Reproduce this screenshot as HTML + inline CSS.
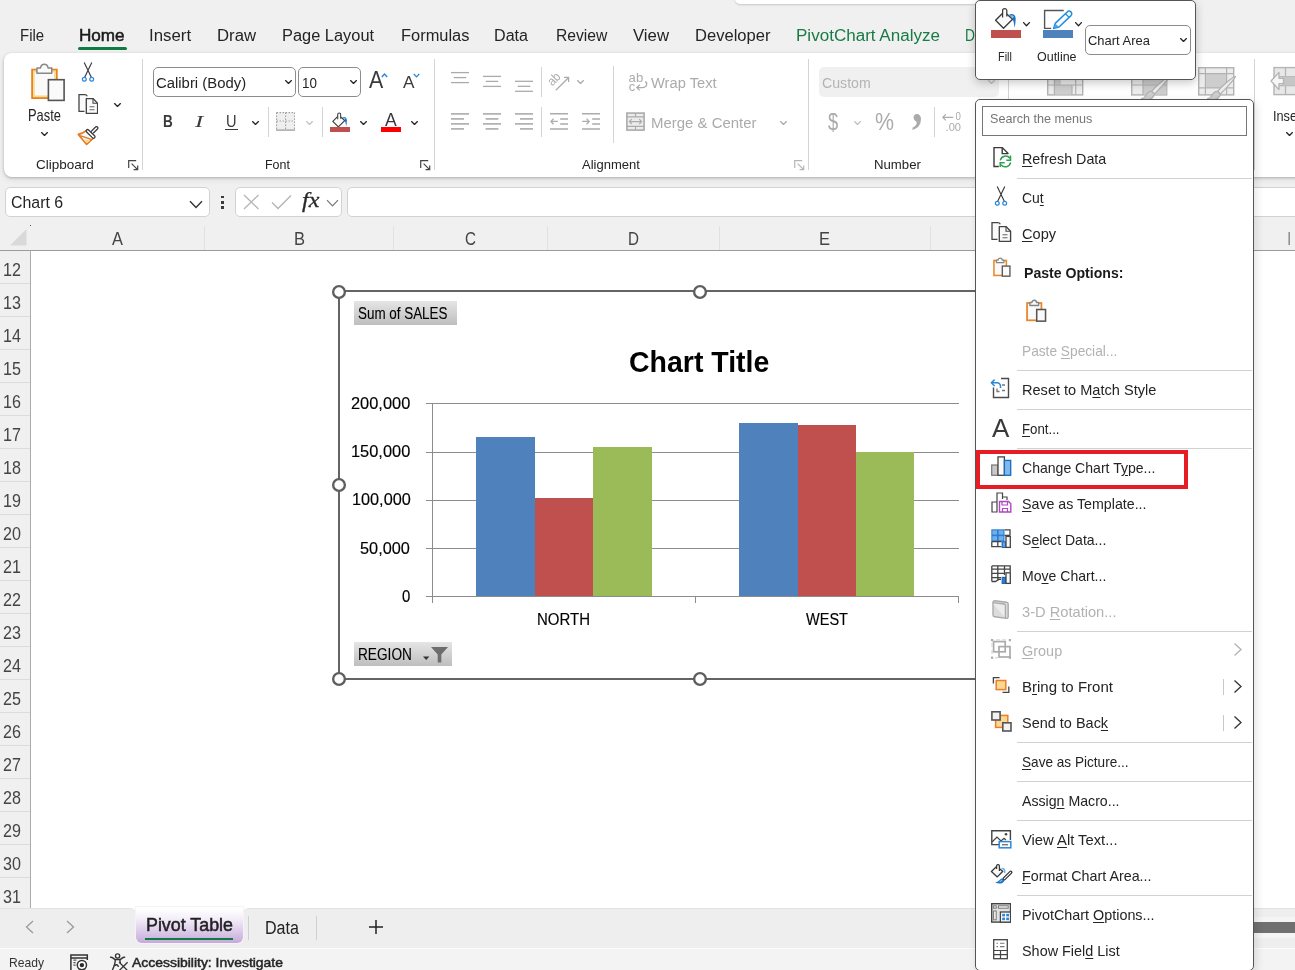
<!DOCTYPE html>
<html><head><meta charset="utf-8"><title>Excel</title><style>
*{margin:0;padding:0;box-sizing:border-box}
html,body{width:1295px;height:970px;overflow:hidden;background:#f0f0f0;font-family:"Liberation Sans",sans-serif}
#app{position:absolute;left:0;top:0;width:1295px;height:970px;overflow:hidden;will-change:transform}
.r{position:absolute;display:block}
.t{position:absolute;white-space:nowrap;transform-origin:0 50%;display:block}
.t u{text-decoration:underline;text-decoration-thickness:1px;text-underline-offset:2px}
</style></head><body><div id="app">
<div class="r" style="left:735px;top:-6px;width:400px;height:10px;background:#fff;border-radius:5px;box-shadow:0 1px 2px rgba(0,0,0,.18);"></div>
<span class="t" style="left:20.00px;top:25px;font-size:17.3px;line-height:20px;height:20px;color:#242424;transform:scaleX(0.8649);">File</span>
<span class="t" style="left:149.00px;top:25px;font-size:17.3px;line-height:20px;height:20px;color:#242424;transform:scaleX(0.9739);">Insert</span>
<span class="t" style="left:217.00px;top:25px;font-size:17.3px;line-height:20px;height:20px;color:#242424;transform:scaleX(0.9689);">Draw</span>
<span class="t" style="left:281.60px;top:25px;font-size:17.3px;line-height:20px;height:20px;color:#242424;transform:scaleX(0.9486);">Page Layout</span>
<span class="t" style="left:400.50px;top:25px;font-size:17.3px;line-height:20px;height:20px;color:#242424;transform:scaleX(0.9503);">Formulas</span>
<span class="t" style="left:494.00px;top:25px;font-size:17.3px;line-height:20px;height:20px;color:#242424;transform:scaleX(0.9315);">Data</span>
<span class="t" style="left:555.70px;top:25px;font-size:17.3px;line-height:20px;height:20px;color:#242424;transform:scaleX(0.9060);">Review</span>
<span class="t" style="left:633.00px;top:25px;font-size:17.3px;line-height:20px;height:20px;color:#242424;transform:scaleX(0.9697);">View</span>
<span class="t" style="left:694.70px;top:25px;font-size:17.3px;line-height:20px;height:20px;color:#242424;transform:scaleX(0.9577);">Developer</span>
<span class="t" style="left:79.00px;top:25px;font-size:17.3px;line-height:20px;height:20px;color:#1a1a1a;-webkit-text-stroke:0.55px #1a1a1a;transform:scaleX(0.9891);">Home</span>
<div class="r" style="left:78px;top:46.5px;width:49px;height:3px;background:#107c41;border-radius:1.5px;"></div>
<span class="t" style="left:796.00px;top:25px;font-size:17.3px;line-height:20px;height:20px;color:#187a45;transform:scaleX(0.9859);">PivotChart Analyze</span>
<span class="t" style="left:965.00px;top:25px;font-size:17.3px;line-height:20px;height:20px;color:#187a45;transform:scaleX(0.8000);">D</span>
<div class="r" style="left:4px;top:52.5px;width:1300px;height:124px;background:#fff;border-radius:8px;box-shadow:0 1px 3px rgba(0,0,0,.22),0 2px 6px rgba(0,0,0,.10);"></div>
<div class="r" style="left:142px;top:59px;width:1px;height:111px;background:#d4d4d4;"></div>
<div class="r" style="left:434px;top:59px;width:1px;height:111px;background:#d4d4d4;"></div>
<div class="r" style="left:808px;top:59px;width:1px;height:111px;background:#d4d4d4;"></div>
<div class="r" style="left:1008px;top:59px;width:1px;height:111px;background:#d4d4d4;"></div>
<div class="r" style="left:1254px;top:59px;width:1px;height:111px;background:#d4d4d4;"></div>
<div class="r" style="left:268px;top:107px;width:1px;height:30px;background:#d4d4d4;"></div>
<div class="r" style="left:322px;top:107px;width:1px;height:30px;background:#d4d4d4;"></div>
<div class="r" style="left:541px;top:67px;width:1px;height:30px;background:#d4d4d4;"></div>
<div class="r" style="left:541px;top:107px;width:1px;height:30px;background:#d4d4d4;"></div>
<div class="r" style="left:613px;top:66px;width:1px;height:77px;background:#d4d4d4;"></div>
<div class="r" style="left:934px;top:107px;width:1px;height:30px;background:#d4d4d4;"></div>
<span class="t" style="left:36.00px;top:157px;font-size:13.2px;line-height:15px;height:15px;color:#242424;transform:scaleX(1.0220);">Clipboard</span>
<span class="t" style="left:265.00px;top:157px;font-size:13.2px;line-height:15px;height:15px;color:#242424;transform:scaleX(0.9434);">Font</span>
<span class="t" style="left:582.00px;top:157px;font-size:13.2px;line-height:15px;height:15px;color:#242424;transform:scaleX(0.9851);">Alignment</span>
<span class="t" style="left:874.00px;top:157px;font-size:13.2px;line-height:15px;height:15px;color:#242424;">Number</span>
<svg class="r" style="left:128px;top:160px;" width="11" height="11" viewBox="0 0 11 11"><path d="M0.7 8 V0.7 H8.2" fill="none" stroke="#444" stroke-width="1.2"/><path d="M3.6 3.6 L9.6 9.6 M5.6 9.7 H9.7 V5.6" fill="none" stroke="#444" stroke-width="1.2"/></svg>
<svg class="r" style="left:420px;top:160px;" width="11" height="11" viewBox="0 0 11 11"><path d="M0.7 8 V0.7 H8.2" fill="none" stroke="#444" stroke-width="1.2"/><path d="M3.6 3.6 L9.6 9.6 M5.6 9.7 H9.7 V5.6" fill="none" stroke="#444" stroke-width="1.2"/></svg>
<svg class="r" style="left:794px;top:160px;" width="11" height="11" viewBox="0 0 11 11"><path d="M0.7 8 V0.7 H8.2" fill="none" stroke="#b5b5b5" stroke-width="1.2"/><path d="M3.6 3.6 L9.6 9.6 M5.6 9.7 H9.7 V5.6" fill="none" stroke="#b5b5b5" stroke-width="1.2"/></svg>
<svg class="r" style="left:30px;top:61.5px;" width="36.0" height="40.0" viewBox="0 0 36 40"><rect x="2.15" y="7.65" width="24.6" height="28.4" fill="#fafafa" stroke="#e8841f" stroke-width="1.9"/><rect x="3.95" y="9.45" width="21" height="24.8" fill="none" stroke="#f8d98c" stroke-width="1.6"/><path d="M6.95 11.2 V5.9 H10.5 A3.9 4.6 0 0 1 18.1 5.9 H21.75 V11.2 Z" fill="#fafafa" stroke="#8a8785" stroke-width="1.5" stroke-linejoin="round"/><rect x="18.4" y="17.7" width="15.7" height="20.7" fill="#fafafa" stroke="#555" stroke-width="1.6"/></svg>
<span class="t" style="left:28.00px;top:106px;font-size:16.6px;line-height:19px;height:19px;color:#242424;transform:scaleX(0.7765);">Paste</span>
<svg class="r" style="left:40px;top:131px;" width="9" height="6" viewBox="0 0 9 6"><path d="M1.58 1.58 L4.50 4.42 L7.42 1.58" fill="none" stroke="#242424" stroke-width="1.3" stroke-linecap="round" stroke-linejoin="round"/></svg>
<svg class="r" style="left:81px;top:62px;" width="14.0" height="20.5" viewBox="0 0 14 20.5"><path d="M3.2 0.5 L10.3 15.3 M10.8 0.5 L3.7 15.3" fill="none" stroke="#3a3a3a" stroke-width="1.15"/><circle cx="3.3" cy="17.3" r="1.9" fill="#fff" stroke="#2b88d8" stroke-width="1.25"/><circle cx="10.7" cy="17.3" r="1.9" fill="#fff" stroke="#2b88d8" stroke-width="1.25"/></svg>
<svg class="r" style="left:77.8px;top:93.8px;" width="20.5" height="20.5" viewBox="0 0 20.5 20.5"><path d="M6.5 17.3 H1 V0.7 H7 Q8.5 0.7 9.3 2.2" fill="#fafafa" stroke="#444" stroke-width="1.3"/><path d="M8.3 4.6 H15 L19.6 9.2 V19.4 H8.3 Z" fill="#fafafa" stroke="#444" stroke-width="1.35" stroke-linejoin="round"/><path d="M15 4.6 V9.2 H19.6" fill="none" stroke="#444" stroke-width="1.1"/><path d="M11.5 12.8 H16.5 M11.5 15.7 H16.5" stroke="#666" stroke-width="1.1"/></svg>
<svg class="r" style="left:112.5px;top:101.5px;" width="9" height="6" viewBox="0 0 9 6"><path d="M1.58 1.58 L4.50 4.42 L7.42 1.58" fill="none" stroke="#242424" stroke-width="1.3" stroke-linecap="round" stroke-linejoin="round"/></svg>
<svg class="r" style="left:77px;top:126px;" width="23" height="20" viewBox="0 0 23 20"><path d="M9.2 4.6 Q5.6 7.6 1.3 8.4 L9.6 18.4 L16.6 12" fill="#fafafa" stroke="#e8761a" stroke-width="1.6" stroke-linejoin="round"/><path d="M3 9.6 L15 13.6" stroke="#e8761a" stroke-width="1.5"/><path d="M7.4 12.9 L13.2 14.8 L9.8 17.2 Z" fill="#f9d67f"/><path d="M19.5 2 L16 5.5" stroke="#3a3a3a" stroke-width="3.9" stroke-linecap="round"/><path d="M19.5 2 L15.2 6.3" stroke="#fff" stroke-width="1.5" stroke-linecap="round"/><path d="M10.6 5 L16.6 10.8" stroke="#3a3a3a" stroke-width="4.1" stroke-linecap="round"/><path d="M10.6 5 L16.6 10.8" stroke="#fff" stroke-width="1.6" stroke-linecap="round"/></svg>
<div class="r" style="left:153px;top:67px;width:142.5px;height:29.75px;background:#fff;border:1px solid #8c8c8c;border-radius:5px;"></div>
<div class="r" style="left:298px;top:67px;width:62.5px;height:29.75px;background:#fff;border:1px solid #8c8c8c;border-radius:5px;"></div>
<span class="t" style="left:156.00px;top:75px;font-size:14.7px;line-height:16px;height:16px;color:#242424;transform:scaleX(1.0126);">Calibri (Body)</span>
<span class="t" style="left:302.00px;top:75px;font-size:14.7px;line-height:16px;height:16px;color:#242424;transform:scaleX(0.9160);">10</span>
<svg class="r" style="left:284px;top:79px;" width="9" height="6" viewBox="0 0 9 6"><path d="M1.58 1.58 L4.50 4.42 L7.42 1.58" fill="none" stroke="#242424" stroke-width="1.3" stroke-linecap="round" stroke-linejoin="round"/></svg>
<svg class="r" style="left:348.5px;top:79px;" width="9" height="6" viewBox="0 0 9 6"><path d="M1.58 1.58 L4.50 4.42 L7.42 1.58" fill="none" stroke="#242424" stroke-width="1.3" stroke-linecap="round" stroke-linejoin="round"/></svg>
<span class="t" style="left:369.00px;top:67px;font-size:23.5px;line-height:26px;height:26px;color:#3a3a3a;transform:scaleX(0.9079);">A</span>
<svg class="r" style="left:381.4px;top:73px;" width="7" height="5" viewBox="0 0 7 5"><path d="M0.8 4 L3.5 1.1 L6.2 4" fill="none" stroke="#2b88d8" stroke-width="1.5"/></svg>
<span class="t" style="left:403.00px;top:73px;font-size:17px;line-height:19px;height:19px;color:#3a3a3a;transform:scaleX(1.0110);">A</span>
<svg class="r" style="left:413.4px;top:73px;" width="7" height="5" viewBox="0 0 7 5"><path d="M0.8 1 L3.5 3.9 L6.2 1" fill="none" stroke="#2b88d8" stroke-width="1.3"/></svg>
<span class="t" style="left:163.20px;top:112px;font-size:16.6px;line-height:19px;height:19px;color:#3a3a3a;font-weight:700;transform:scaleX(0.8167);">B</span>
<span class="t" style="left:195.18px;top:111px;font-size:17.5px;line-height:20px;height:20px;color:#3a3a3a;font-style:italic;font-family:'Liberation Serif', serif;transform:scaleX(1.4074);">I</span>
<span class="t" style="left:226.00px;top:112px;font-size:16.5px;line-height:18px;height:18px;color:#3a3a3a;transform:scaleX(0.8842);">U</span>
<div class="r" style="left:225px;top:128.8px;width:12.5px;height:1.2px;background:#3a3a3a;"></div>
<svg class="r" style="left:250.5px;top:119.5px;" width="9" height="6" viewBox="0 0 9 6"><path d="M1.58 1.58 L4.50 4.42 L7.42 1.58" fill="none" stroke="#242424" stroke-width="1.3" stroke-linecap="round" stroke-linejoin="round"/></svg>
<svg class="r" style="left:276px;top:112px;" width="19.2" height="19" viewBox="0 0 19.2 19"><rect x="0" y="0" width="19.2" height="17.6" fill="#efefef"/><path d="M0.6 0.6 H18.6 M0.6 9 H18.6 M0.6 0.6 V17 M9.6 0.6 V17 M18.6 0.6 V17" fill="none" stroke="#a0a0a0" stroke-width="1.1" stroke-dasharray="1.4 1.6"/><path d="M0 18.1 H19.2" stroke="#a8a8a8" stroke-width="1.5"/></svg>
<svg class="r" style="left:305px;top:119.5px;" width="9" height="6" viewBox="0 0 9 6"><path d="M1.58 1.58 L4.50 4.42 L7.42 1.58" fill="none" stroke="#c2c2c2" stroke-width="1.3" stroke-linecap="round" stroke-linejoin="round"/></svg>
<svg class="r" style="left:331.4px;top:111.5px;" width="18.2" height="15.4" viewBox="0 0 26 22"><path d="M2.6 13.3 L11.2 4.8 L19.6 12.2 L10.5 21.2 Z" fill="#fafafa" stroke="#3a3a3a" stroke-width="1.61" stroke-linejoin="round"/><path d="M9.6 10.4 V3.6 A2.1 2.1 0 0 1 13.8 3.6 V9.6" fill="#fafafa" stroke="#3a3a3a" stroke-width="1.49"/><path d="M16 7.8 C19 6 22.8 7.4 22.7 12 C22.6 15 22.2 18 21.7 20.8 C21.2 17 20.6 14 19.6 12.2 Z" fill="#1e6fc0"/><path d="M17.2 8.4 C18.6 7.8 20.4 8.2 21 9.8 L19.4 11.4 Z" fill="#8ec0ee"/></svg>
<div class="r" style="left:330px;top:127px;width:20px;height:5px;background:#c0504d;"></div>
<svg class="r" style="left:359px;top:119.5px;" width="9" height="6" viewBox="0 0 9 6"><path d="M1.58 1.58 L4.50 4.42 L7.42 1.58" fill="none" stroke="#242424" stroke-width="1.3" stroke-linecap="round" stroke-linejoin="round"/></svg>
<span class="t" style="left:385.30px;top:109px;font-size:19px;line-height:21px;height:21px;color:#3a3a3a;transform:scaleX(0.9255);">A</span>
<div class="r" style="left:381px;top:127px;width:20px;height:5px;background:#ff0000;"></div>
<svg class="r" style="left:410px;top:119.5px;" width="9" height="6" viewBox="0 0 9 6"><path d="M1.58 1.58 L4.50 4.42 L7.42 1.58" fill="none" stroke="#242424" stroke-width="1.3" stroke-linecap="round" stroke-linejoin="round"/></svg>
<svg class="r" style="left:451px;top:0px" width="20" height="200" viewBox="0 0 20 200"><path d="M0 72.6 H18" stroke="#ababab" stroke-width="1.3"/><path d="M2.7 77.6 H15.3" stroke="#ababab" stroke-width="1.3"/><path d="M0 82.6 H18" stroke="#ababab" stroke-width="1.3"/></svg>
<svg class="r" style="left:483px;top:0px" width="20" height="200" viewBox="0 0 20 200"><path d="M0 76.4 H18" stroke="#ababab" stroke-width="1.3"/><path d="M2.7 81.4 H15.3" stroke="#ababab" stroke-width="1.3"/><path d="M0 86.4 H18" stroke="#ababab" stroke-width="1.3"/></svg>
<svg class="r" style="left:515px;top:0px" width="20" height="200" viewBox="0 0 20 200"><path d="M0 81.3 H18" stroke="#ababab" stroke-width="1.3"/><path d="M2.7 86.3 H15.3" stroke="#ababab" stroke-width="1.3"/><path d="M0 91.3 H18" stroke="#ababab" stroke-width="1.3"/></svg>
<svg class="r" style="left:451px;top:0px" width="20" height="200" viewBox="0 0 20 200"><path d="M0 113.9 H18" stroke="#ababab" stroke-width="1.6"/><path d="M0 118.9 H13" stroke="#ababab" stroke-width="1.6"/><path d="M0 123.9 H18" stroke="#ababab" stroke-width="1.6"/><path d="M0 128.9 H13" stroke="#ababab" stroke-width="1.6"/></svg>
<svg class="r" style="left:483px;top:0px" width="20" height="200" viewBox="0 0 20 200"><path d="M0 113.9 H18" stroke="#ababab" stroke-width="1.6"/><path d="M2.6 118.9 H15.4" stroke="#ababab" stroke-width="1.6"/><path d="M0 123.9 H18" stroke="#ababab" stroke-width="1.6"/><path d="M2.6 128.9 H15.4" stroke="#ababab" stroke-width="1.6"/></svg>
<svg class="r" style="left:515px;top:0px" width="20" height="200" viewBox="0 0 20 200"><path d="M0 113.9 H18" stroke="#ababab" stroke-width="1.6"/><path d="M5 118.9 H18" stroke="#ababab" stroke-width="1.6"/><path d="M0 123.9 H18" stroke="#ababab" stroke-width="1.6"/><path d="M5 128.9 H18" stroke="#ababab" stroke-width="1.6"/></svg>
<svg class="r" style="left:546px;top:68px;" width="26" height="26" viewBox="0 0 26 26"><path d="M9.8 22.2 L22.4 9.8 M18 9.4 H22.6 V14" fill="none" stroke="#ababab" stroke-width="1.25"/><text x="0" y="0" font-size="12.6" fill="#ababab" font-family="Liberation Sans" transform="translate(6.2,18.6) rotate(-45)" textLength="13" lengthAdjust="spacingAndGlyphs">ab</text></svg>
<svg class="r" style="left:576px;top:79px;" width="9" height="6" viewBox="0 0 9 6"><path d="M1.58 1.58 L4.50 4.42 L7.42 1.58" fill="none" stroke="#ababab" stroke-width="1.3" stroke-linecap="round" stroke-linejoin="round"/></svg>
<svg class="r" style="left:550px;top:112px;" width="18" height="18" viewBox="0 0 18 18"><path d="M0 1.8 H18 M10.2 6.9 H18 M10.2 12 H18 M0 16.9 H18" stroke="#ababab" stroke-width="1.5"/><path d="M7.8 9.4 H0.9 M3.6 6.6 L0.9 9.4 L3.6 12.2" fill="none" stroke="#ababab" stroke-width="1.25"/></svg>
<svg class="r" style="left:582px;top:112px;" width="18" height="18" viewBox="0 0 18 18"><path d="M0 1.8 H18 M10.2 6.9 H18 M10.2 12 H18 M0 16.9 H18" stroke="#ababab" stroke-width="1.5"/><path d="M0.2 9.4 H7.2 M4.5 6.6 L7.2 9.4 L4.5 12.2" fill="none" stroke="#ababab" stroke-width="1.25"/></svg>
<svg class="r" style="left:627px;top:70px;" width="22" height="24" viewBox="0 0 22 24"><text x="1.6" y="11.6" font-size="12.8" fill="#ababab" font-family="Liberation Sans" textLength="14.6" lengthAdjust="spacingAndGlyphs">ab</text><text x="1.8" y="20.6" font-size="12.8" fill="#ababab" font-family="Liberation Sans">c</text><path d="M18.2 11.6 C20.6 12.4 20.4 17.6 15.4 17.6 H10 M12.8 14.8 L9.8 17.6 L12.8 20.4" fill="none" stroke="#ababab" stroke-width="1.25"/></svg>
<span class="t" style="left:651.00px;top:75px;font-size:14.7px;line-height:16px;height:16px;color:#ababab;">Wrap Text</span>
<svg class="r" style="left:626px;top:112px;" width="19" height="19" viewBox="0 0 19 19"><rect x="0.9" y="1.1" width="17.2" height="17" fill="#ececec" stroke="#ababab" stroke-width="1.6"/><path d="M0.9 4.9 H18.1 M0.9 14.4 H18.1 M9.5 1.1 V4.9 M9.5 14.4 V18" stroke="#ababab" stroke-width="1.2"/><path d="M3.4 9.6 H15.6 M5.8 7.2 L3.4 9.6 L5.8 12 M13.2 7.2 L15.6 9.6 L13.2 12" fill="none" stroke="#ababab" stroke-width="1.2"/></svg>
<span class="t" style="left:651.00px;top:115px;font-size:14.7px;line-height:16px;height:16px;color:#ababab;transform:scaleX(1.0180);">Merge &amp; Center</span>
<svg class="r" style="left:779px;top:119.5px;" width="9" height="6" viewBox="0 0 9 6"><path d="M1.58 1.58 L4.50 4.42 L7.42 1.58" fill="none" stroke="#ababab" stroke-width="1.3" stroke-linecap="round" stroke-linejoin="round"/></svg>
<div class="r" style="left:819px;top:67px;width:180px;height:29.75px;background:#f0f0f0;border-radius:5px;"></div>
<span class="t" style="left:822.00px;top:75px;font-size:14.7px;line-height:16px;height:16px;color:#b4b4b4;transform:scaleX(0.9631);">Custom</span>
<svg class="r" style="left:987px;top:79px;" width="9" height="6" viewBox="0 0 9 6"><path d="M1.58 1.58 L4.50 4.42 L7.42 1.58" fill="none" stroke="#c0c0c0" stroke-width="1.3" stroke-linecap="round" stroke-linejoin="round"/></svg>
<span class="t" style="left:827.80px;top:108px;font-size:24px;line-height:27px;height:27px;color:#ababab;transform:scaleX(0.7626);">$</span>
<svg class="r" style="left:852.8px;top:119.6px;" width="9" height="6" viewBox="0 0 9 6"><path d="M1.58 1.58 L4.50 4.42 L7.42 1.58" fill="none" stroke="#c0c0c0" stroke-width="1.3" stroke-linecap="round" stroke-linejoin="round"/></svg>
<span class="t" style="left:875.00px;top:108px;font-size:24.5px;line-height:27px;height:27px;color:#ababab;transform:scaleX(0.8736);">%</span>
<span class="t" style="left:912.40px;top:76px;font-size:52px;line-height:57px;height:57px;color:#ababab;font-weight:700;font-family:'Liberation Serif', serif;transform:scaleX(0.8154);">,</span>
<svg class="r" style="left:941px;top:110px;" width="22" height="22" viewBox="0 0 22 22"><path d="M12.2 7.3 H1.8 M4.8 4.3 L1.8 7.3 L4.8 10.3" fill="none" stroke="#ababab" stroke-width="1.2"/><text x="14.6" y="10.4" font-size="11.4" fill="#ababab" font-family="Liberation Sans" textLength="5.4" lengthAdjust="spacingAndGlyphs">0</text><text x="4.6" y="20.5" font-size="11.4" fill="#ababab" font-family="Liberation Sans" textLength="15.4" lengthAdjust="spacingAndGlyphs">.00</text></svg>
<svg class="r" style="left:1047px;top:67px;" width="37" height="29" viewBox="0 0 37 29"><rect x="0.7" y="0.7" width="35" height="27.2" fill="#ececec" stroke="#b2b2b2" stroke-width="1.4"/><rect x="7.4" y="13" width="6.5" height="5" fill="#cdcdcd"/><rect x="7.4" y="18" width="17.5" height="9.5" fill="#cdcdcd"/><rect x="7.4" y="6" width="10" height="6" fill="#cdcdcd"/><path d="M7.4 0.7 V28 M28.7 0.7 V28 M0.7 6.5 H36 M0.7 18 H36 M25 18 V28" stroke="#b2b2b2" stroke-width="1.2" fill="none"/></svg>
<svg class="r" style="left:1131px;top:67px;" width="37" height="29" viewBox="0 0 37 29"><rect x="0.7" y="0.7" width="35" height="27.2" fill="#ececec" stroke="#b2b2b2" stroke-width="1.4"/><rect x="12" y="6.5" width="23.5" height="21" fill="#cdcdcd"/><path d="M12 0.7 V28 M0.7 6.5 H36 M0.7 18 H36" stroke="#b2b2b2" stroke-width="1.2" fill="none"/></svg>
<svg class="r" style="left:1131.5px;top:67px;" width="40" height="36" viewBox="0 0 40 36"><path d="M37.5 9.5 C33 11 24 19 19.5 24.5 L22.5 27 C28 21 35.5 14 37.5 9.5 Z" fill="#ececec" stroke="#b2b2b2" stroke-width="1.2" stroke-linejoin="round"/><path d="M19.5 24.5 C16 24 14.5 27 13.5 29 C12.5 31 11 31.5 9.5 31.5 C14 33.5 21 33 22.5 27 Z" fill="#cdcdcd" stroke="#b2b2b2" stroke-width="1.2" stroke-linejoin="round"/></svg>
<svg class="r" style="left:1198px;top:67px;" width="37" height="29" viewBox="0 0 37 29"><rect x="0.7" y="0.7" width="35" height="27.2" fill="#ececec" stroke="#b2b2b2" stroke-width="1.4"/><rect x="7.4" y="6.6" width="21.2" height="14.3" fill="#cdcdcd"/><path d="M7.4 0.7 V28 M28.6 0.7 V28 M0.7 6.6 H36 M0.7 20.9 H36" stroke="#b2b2b2" stroke-width="1.2" fill="none"/></svg>
<svg class="r" style="left:1198px;top:67px;" width="40" height="36" viewBox="0 0 40 36"><path d="M37.5 9.5 C33 11 24 19 19.5 24.5 L22.5 27 C28 21 35.5 14 37.5 9.5 Z" fill="#ececec" stroke="#b2b2b2" stroke-width="1.2" stroke-linejoin="round"/><path d="M19.5 24.5 C16 24 14.5 27 13.5 29 C12.5 31 11 31.5 9.5 31.5 C14 33.5 21 33 22.5 27 Z" fill="#cdcdcd" stroke="#b2b2b2" stroke-width="1.2" stroke-linejoin="round"/></svg>
<svg class="r" style="left:1270px;top:66px;" width="26" height="31" viewBox="0 0 26 31"><rect x="4" y="1.6" width="24" height="27" fill="#e8e8e8" stroke="#b4b4b4" stroke-width="1.4"/><path d="M4 10.6 H28 M4 19.6 H28 M15.5 1.6 V10.6 M15.5 19.6 V28.6" stroke="#b4b4b4" stroke-width="1.3"/><rect x="12" y="10.6" width="16" height="9" fill="#c6c6c6"/><path d="M13.5 12.4 H9 V6.4 L1 15 L9 23.6 V17.6 H13.5 Z" fill="#f6f6f6" stroke="#b4b4b4" stroke-width="1.3" stroke-linejoin="round"/></svg>
<span class="t" style="left:1273.00px;top:107px;font-size:15.5px;line-height:17px;height:17px;color:#242424;transform:scaleX(0.8205);">Inse</span>
<svg class="r" style="left:1285px;top:131px;" width="9" height="6" viewBox="0 0 9 6"><path d="M1.58 1.58 L4.50 4.42 L7.42 1.58" fill="none" stroke="#242424" stroke-width="1.3" stroke-linecap="round" stroke-linejoin="round"/></svg>
<div class="r" style="left:4.5px;top:187px;width:205px;height:29.5px;background:#fff;border-radius:5px;border:1px solid #d2d2d2;"></div>
<span class="t" style="left:11.00px;top:193px;font-size:16.3px;line-height:18px;height:18px;color:#242424;transform:scaleX(0.9765);">Chart 6</span>
<svg class="r" style="left:189px;top:200px;" width="14" height="9" viewBox="0 0 14 9"><path d="M1 1.2 L7 7.4 L13 1.2" fill="none" stroke="#333" stroke-width="1.4"/></svg>
<div class="r" style="left:221.1px;top:195.6px;width:2.6px;height:2.6px;background:#3a3a3a;"></div>
<div class="r" style="left:221.1px;top:201.0px;width:2.6px;height:2.6px;background:#3a3a3a;"></div>
<div class="r" style="left:221.1px;top:206.4px;width:2.6px;height:2.6px;background:#3a3a3a;"></div>
<div class="r" style="left:235px;top:187px;width:107px;height:29.5px;background:#fff;border-radius:5px;border:1px solid #d2d2d2;"></div>
<svg class="r" style="left:243px;top:194px;" width="17" height="16" viewBox="0 0 17 16"><path d="M1 1 L15.5 15 M15.5 1 L1 15" stroke="#b4b4b4" stroke-width="1.3"/></svg>
<svg class="r" style="left:271px;top:194px;" width="21" height="16" viewBox="0 0 21 16"><path d="M1 8.5 L7 14.5 L20 1.5" fill="none" stroke="#b4b4b4" stroke-width="1.3"/></svg>
<span class="t" style="left:302.40px;top:188px;font-size:21px;line-height:24px;height:24px;color:#2a2a2a;-webkit-text-stroke:0.3px #2a2a2a;font-style:italic;font-family:'Liberation Serif', serif;transform:scaleX(1.1504);">fx</span>
<svg class="r" style="left:326px;top:199px;" width="13" height="9" viewBox="0 0 13 9"><path d="M1 1.2 L6.5 7 L12 1.2" fill="none" stroke="#777" stroke-width="1.2"/></svg>
<div class="r" style="left:347px;top:187px;width:960px;height:29.5px;background:#fff;border-radius:5px;border:1px solid #d2d2d2;"></div>
<div class="r" style="left:31px;top:250.5px;width:1270px;height:658px;background:#fff;"></div>
<div class="r" style="left:0px;top:250px;width:1295px;height:1px;background:#9b9b9b;"></div>
<div class="r" style="left:30px;top:250px;width:1px;height:659px;background:#ababab;"></div>
<div class="r" style="left:30px;top:224.6px;width:1.2px;height:1.2px;background:#555;"></div>
<svg class="r" style="left:9px;top:228px;" width="19" height="19" viewBox="0 0 19 19"><path d="M17.5 1 V17.5 H1 Z" fill="#d9d9d9"/></svg>
<span class="t" style="left:112.00px;top:228px;font-size:19px;line-height:21px;height:21px;color:#444;transform:scaleX(0.8627);">A</span>
<span class="t" style="left:293.50px;top:228px;font-size:19px;line-height:21px;height:21px;color:#444;transform:scaleX(0.8713);">B</span>
<span class="t" style="left:464.50px;top:228px;font-size:19px;line-height:21px;height:21px;color:#444;transform:scaleX(0.8000);">C</span>
<span class="t" style="left:628.00px;top:228px;font-size:19px;line-height:21px;height:21px;color:#444;transform:scaleX(0.8000);">D</span>
<span class="t" style="left:819.00px;top:228px;font-size:19px;line-height:21px;height:21px;color:#444;transform:scaleX(0.8713);">E</span>
<span class="t" style="left:1288.30px;top:228px;font-size:19px;line-height:21px;height:21px;color:#2a2a2a;transform:scaleX(0.4190);">I</span>
<div class="r" style="left:204px;top:225.5px;width:1px;height:24.5px;background:#e1e1e1;"></div>
<div class="r" style="left:393px;top:225.5px;width:1px;height:24.5px;background:#e1e1e1;"></div>
<div class="r" style="left:547px;top:225.5px;width:1px;height:24.5px;background:#e1e1e1;"></div>
<div class="r" style="left:719px;top:225.5px;width:1px;height:24.5px;background:#e1e1e1;"></div>
<div class="r" style="left:930px;top:225.5px;width:1px;height:24.5px;background:#e1e1e1;"></div>
<span class="t" style="left:3.00px;top:259px;font-size:18.6px;line-height:21px;height:21px;color:#444;transform:scaleX(0.8675);">12</span>
<div class="r" style="left:0px;top:283px;width:30px;height:1px;background:#dcdcdc;"></div>
<span class="t" style="left:3.00px;top:292px;font-size:18.6px;line-height:21px;height:21px;color:#444;transform:scaleX(0.8675);">13</span>
<div class="r" style="left:0px;top:316px;width:30px;height:1px;background:#dcdcdc;"></div>
<span class="t" style="left:3.00px;top:325px;font-size:18.6px;line-height:21px;height:21px;color:#444;transform:scaleX(0.8675);">14</span>
<div class="r" style="left:0px;top:349px;width:30px;height:1px;background:#dcdcdc;"></div>
<span class="t" style="left:3.00px;top:358px;font-size:18.6px;line-height:21px;height:21px;color:#444;transform:scaleX(0.8675);">15</span>
<div class="r" style="left:0px;top:382px;width:30px;height:1px;background:#dcdcdc;"></div>
<span class="t" style="left:3.00px;top:391px;font-size:18.6px;line-height:21px;height:21px;color:#444;transform:scaleX(0.8675);">16</span>
<div class="r" style="left:0px;top:415px;width:30px;height:1px;background:#dcdcdc;"></div>
<span class="t" style="left:3.00px;top:424px;font-size:18.6px;line-height:21px;height:21px;color:#444;transform:scaleX(0.8675);">17</span>
<div class="r" style="left:0px;top:448px;width:30px;height:1px;background:#dcdcdc;"></div>
<span class="t" style="left:3.00px;top:457px;font-size:18.6px;line-height:21px;height:21px;color:#444;transform:scaleX(0.8675);">18</span>
<div class="r" style="left:0px;top:481px;width:30px;height:1px;background:#dcdcdc;"></div>
<span class="t" style="left:3.00px;top:490px;font-size:18.6px;line-height:21px;height:21px;color:#444;transform:scaleX(0.8675);">19</span>
<div class="r" style="left:0px;top:514px;width:30px;height:1px;background:#dcdcdc;"></div>
<span class="t" style="left:3.00px;top:523px;font-size:18.6px;line-height:21px;height:21px;color:#444;transform:scaleX(0.8675);">20</span>
<div class="r" style="left:0px;top:547px;width:30px;height:1px;background:#dcdcdc;"></div>
<span class="t" style="left:3.00px;top:556px;font-size:18.6px;line-height:21px;height:21px;color:#444;transform:scaleX(0.8675);">21</span>
<div class="r" style="left:0px;top:580px;width:30px;height:1px;background:#dcdcdc;"></div>
<span class="t" style="left:3.00px;top:589px;font-size:18.6px;line-height:21px;height:21px;color:#444;transform:scaleX(0.8675);">22</span>
<div class="r" style="left:0px;top:613px;width:30px;height:1px;background:#dcdcdc;"></div>
<span class="t" style="left:3.00px;top:622px;font-size:18.6px;line-height:21px;height:21px;color:#444;transform:scaleX(0.8675);">23</span>
<div class="r" style="left:0px;top:646px;width:30px;height:1px;background:#dcdcdc;"></div>
<span class="t" style="left:3.00px;top:655px;font-size:18.6px;line-height:21px;height:21px;color:#444;transform:scaleX(0.8675);">24</span>
<div class="r" style="left:0px;top:679px;width:30px;height:1px;background:#dcdcdc;"></div>
<span class="t" style="left:3.00px;top:688px;font-size:18.6px;line-height:21px;height:21px;color:#444;transform:scaleX(0.8675);">25</span>
<div class="r" style="left:0px;top:712px;width:30px;height:1px;background:#dcdcdc;"></div>
<span class="t" style="left:3.00px;top:721px;font-size:18.6px;line-height:21px;height:21px;color:#444;transform:scaleX(0.8675);">26</span>
<div class="r" style="left:0px;top:745px;width:30px;height:1px;background:#dcdcdc;"></div>
<span class="t" style="left:3.00px;top:754px;font-size:18.6px;line-height:21px;height:21px;color:#444;transform:scaleX(0.8675);">27</span>
<div class="r" style="left:0px;top:778px;width:30px;height:1px;background:#dcdcdc;"></div>
<span class="t" style="left:3.00px;top:787px;font-size:18.6px;line-height:21px;height:21px;color:#444;transform:scaleX(0.8675);">28</span>
<div class="r" style="left:0px;top:811px;width:30px;height:1px;background:#dcdcdc;"></div>
<span class="t" style="left:3.00px;top:820px;font-size:18.6px;line-height:21px;height:21px;color:#444;transform:scaleX(0.8675);">29</span>
<div class="r" style="left:0px;top:844px;width:30px;height:1px;background:#dcdcdc;"></div>
<span class="t" style="left:3.00px;top:853px;font-size:18.6px;line-height:21px;height:21px;color:#444;transform:scaleX(0.8675);">30</span>
<div class="r" style="left:0px;top:877px;width:30px;height:1px;background:#dcdcdc;"></div>
<span class="t" style="left:3.00px;top:886px;font-size:18.6px;line-height:21px;height:21px;color:#444;transform:scaleX(0.8675);">31</span>
<div class="r" style="left:339px;top:291.5px;width:700px;height:387px;background:#fff;"></div>
<div class="r" style="left:338px;top:289.95px;width:700px;height:1.95px;background:#646464;"></div>
<div class="r" style="left:338px;top:677.95px;width:700px;height:1.95px;background:#646464;"></div>
<div class="r" style="left:338px;top:290px;width:2px;height:389.5px;background:#646464;"></div>
<div class="r" style="left:426px;top:403px;width:533px;height:1px;background:#8c8c8c;"></div>
<div class="r" style="left:426px;top:452px;width:533px;height:1px;background:#8c8c8c;"></div>
<div class="r" style="left:426px;top:500px;width:533px;height:1px;background:#8c8c8c;"></div>
<div class="r" style="left:426px;top:548px;width:533px;height:1px;background:#8c8c8c;"></div>
<div class="r" style="left:426px;top:596px;width:533px;height:1px;background:#8c8c8c;"></div>
<div class="r" style="left:432px;top:403px;width:1px;height:199.5px;background:#8c8c8c;"></div>
<div class="r" style="left:695px;top:596px;width:1px;height:6.5px;background:#8c8c8c;"></div>
<div class="r" style="left:958px;top:596px;width:1px;height:6.5px;background:#8c8c8c;"></div>
<div class="r" style="left:476px;top:436.7px;width:59px;height:159.59999999999997px;background:#4f81bd;"></div>
<div class="r" style="left:535px;top:497.9px;width:58px;height:98.39999999999998px;background:#c0504d;"></div>
<div class="r" style="left:593px;top:446.8px;width:59px;height:149.49999999999994px;background:#9bbb59;"></div>
<div class="r" style="left:739px;top:423px;width:59px;height:173.29999999999995px;background:#4f81bd;"></div>
<div class="r" style="left:798px;top:425px;width:58px;height:171.29999999999995px;background:#c0504d;"></div>
<div class="r" style="left:856px;top:452px;width:58px;height:144.29999999999995px;background:#9bbb59;"></div>
<span class="t" style="left:351.00px;top:394px;font-size:16.2px;line-height:18px;height:18px;color:#000;-webkit-text-stroke:0.15px #000;transform:scaleX(1.0128);">200,000</span>
<span class="t" style="left:351.00px;top:442px;font-size:16.2px;line-height:18px;height:18px;color:#000;-webkit-text-stroke:0.15px #000;transform:scaleX(1.0128);">150,000</span>
<span class="t" style="left:351.50px;top:490px;font-size:16.2px;line-height:18px;height:18px;color:#000;-webkit-text-stroke:0.15px #000;transform:scaleX(1.0043);">100,000</span>
<span class="t" style="left:360.40px;top:539px;font-size:16.2px;line-height:18px;height:18px;color:#000;-webkit-text-stroke:0.15px #000;transform:scaleX(1.0070);">50,000</span>
<span class="t" style="left:402.20px;top:587px;font-size:16.2px;line-height:18px;height:18px;color:#000;-webkit-text-stroke:0.15px #000;transform:scaleX(0.9222);">0</span>
<span class="t" style="left:537.30px;top:611px;font-size:16px;line-height:17px;height:17px;color:#000;-webkit-text-stroke:0.15px #000;transform:scaleX(0.9360);">NORTH</span>
<span class="t" style="left:806.00px;top:611px;font-size:16px;line-height:17px;height:17px;color:#000;-webkit-text-stroke:0.15px #000;transform:scaleX(0.9081);">WEST</span>
<span class="t" style="left:629.30px;top:345px;font-size:30.2px;line-height:33px;height:33px;color:#000;font-weight:700;transform:scaleX(0.9436);">Chart Title</span>
<div class="r" style="left:354px;top:301px;width:103px;height:23.8px;background:linear-gradient(#e5e5e5,#bebebe);"></div>
<span class="t" style="left:358.00px;top:305px;font-size:16px;line-height:17px;height:17px;color:#000;-webkit-text-stroke:0.1px #000;transform:scaleX(0.8384);">Sum of SALES</span>
<div class="r" style="left:354px;top:642.3px;width:98px;height:23.5px;background:linear-gradient(#e5e5e5,#bebebe);"></div>
<span class="t" style="left:358.00px;top:646px;font-size:15.6px;line-height:17px;height:17px;color:#000;-webkit-text-stroke:0.1px #000;transform:scaleX(0.8763);">REGION</span>
<svg class="r" style="left:423px;top:646px;" width="26" height="18" viewBox="0 0 26 18"><path d="M0 10.5 H6.4 L3.2 14 Z" fill="#333"/><path d="M8 1 H25 L18.3 8.6 V16.5 H14.7 V8.6 Z" fill="#6d6d6d"/></svg>
<svg class="r" style="left:331px;top:283.8px;" width="16" height="16" viewBox="0 0 16 16"><circle cx="8" cy="8" r="5.85" fill="#fff" stroke="#5e5e5e" stroke-width="2.35"/></svg>
<svg class="r" style="left:692px;top:283.8px;" width="16" height="16" viewBox="0 0 16 16"><circle cx="8" cy="8" r="5.85" fill="#fff" stroke="#5e5e5e" stroke-width="2.35"/></svg>
<svg class="r" style="left:331px;top:477px;" width="16" height="16" viewBox="0 0 16 16"><circle cx="8" cy="8" r="5.85" fill="#fff" stroke="#5e5e5e" stroke-width="2.35"/></svg>
<svg class="r" style="left:331px;top:670.9px;" width="16" height="16" viewBox="0 0 16 16"><circle cx="8" cy="8" r="5.85" fill="#fff" stroke="#5e5e5e" stroke-width="2.35"/></svg>
<svg class="r" style="left:692px;top:670.9px;" width="16" height="16" viewBox="0 0 16 16"><circle cx="8" cy="8" r="5.85" fill="#fff" stroke="#5e5e5e" stroke-width="2.35"/></svg>
<div class="r" style="left:0px;top:908px;width:1295px;height:40px;background:#fff;"></div>
<div class="r" style="left:0px;top:908px;width:135.5px;height:40px;background:#eeeeee;border-top-right-radius:6px;border-top:1px solid #e2e2e2;"></div>
<div class="r" style="left:243px;top:908px;width:1060px;height:40px;background:#eeeeee;border-top-left-radius:6px;border-top:1px solid #e2e2e2;"></div>
<div class="r" style="left:130px;top:918px;width:120px;height:30px;background:#eeeeee;"></div>
<div class="r" style="left:1240px;top:917px;width:60px;height:21px;background:#f4f4f4;"></div>
<div class="r" style="left:1240px;top:922px;width:60px;height:11px;background:#707070;"></div>
<div class="r" style="left:135.5px;top:907px;width:107.5px;height:35.5px;background:linear-gradient(#ffffff 6%,#f4eef9 32%,#dfd0ec 62%,#c6aada 100%);border-radius:0 0 6px 6px;box-shadow:0 0 0 1px #f6f3f8;"></div>
<span class="t" style="left:146.00px;top:915px;font-size:18px;line-height:20px;height:20px;color:#222;-webkit-text-stroke:0.5px #222;transform:scaleX(0.9915);">Pivot Table</span>
<div class="r" style="left:145px;top:937.7px;width:88.2px;height:2.5px;background:#107c41;"></div>
<svg class="r" style="left:25px;top:920px;" width="10" height="14" viewBox="0 0 10 14"><path d="M8 1 L1.5 7 L8 13" fill="none" stroke="#9a9a9a" stroke-width="1.3"/></svg>
<svg class="r" style="left:65px;top:920px;" width="10" height="14" viewBox="0 0 10 14"><path d="M2 1 L8.5 7 L2 13" fill="none" stroke="#9a9a9a" stroke-width="1.3"/></svg>
<div class="r" style="left:248px;top:916px;width:1px;height:24px;background:#d0d0d0;"></div>
<div class="r" style="left:316px;top:916px;width:1px;height:24px;background:#d0d0d0;"></div>
<span class="t" style="left:265.00px;top:918px;font-size:18px;line-height:20px;height:20px;color:#222;transform:scaleX(0.8918);">Data</span>
<svg class="r" style="left:368px;top:919px;" width="16" height="16" viewBox="0 0 16 16"><path d="M8 1 V15 M1 8 H15" stroke="#222" stroke-width="1.5"/></svg>
<div class="r" style="left:0px;top:948px;width:1295px;height:22px;background:#f3f3f3;"></div>
<div class="r" style="left:0px;top:948px;width:1295px;height:1px;background:#fbfbfb;"></div>
<span class="t" style="left:8.80px;top:955px;font-size:13.4px;line-height:15px;height:15px;color:#333;transform:scaleX(0.9032);">Ready</span>
<svg class="r" style="left:70px;top:953px;" width="19" height="17" viewBox="0 0 19 17"><path d="M0.9 17 V1.9 H17.3 V7 M0.9 5 H17.3" fill="none" stroke="#333" stroke-width="1.5"/><path d="M3.4 7.2 H6.4 M3.4 9.7 H5.6 M3.4 12.2 H5.6" stroke="#555" stroke-width="1.3"/><circle cx="11.9" cy="12.1" r="4.6" fill="#fff" stroke="#333" stroke-width="1.5"/><circle cx="11.9" cy="12.1" r="2.2" fill="#2a2a2a"/></svg>
<svg class="r" style="left:109px;top:952px;" width="20" height="18" viewBox="0 0 20 18"><circle cx="8.6" cy="4" r="2.1" fill="#fff" stroke="#333" stroke-width="1.4"/><path d="M1.6 5.2 C3.4 4.8 4.4 6.8 6.2 7.6 H11 C12.8 6.8 13.8 4.8 15.6 5.2" fill="none" stroke="#333" stroke-width="1.5" stroke-linecap="round"/><path d="M6.2 7.6 C6.4 11 5 14.5 3.4 18 M11 7.6 C10.8 9 11 10 11.4 11 M5.8 14 C7 12 9 12.4 9.4 15" fill="none" stroke="#333" stroke-width="1.4"/><path d="M10.2 10.2 L18.4 18.4 M18.6 10.2 L10.2 18.6" stroke="#333" stroke-width="1.3"/></svg>
<span class="t" style="left:132.30px;top:955px;font-size:13.2px;line-height:15px;height:15px;color:#262626;-webkit-text-stroke:0.5px #262626;transform:scaleX(1.0562);">Accessibility: Investigate</span>
<div class="r" style="left:975px;top:0px;width:221px;height:80px;background:#fff;border:1px solid #555;border-radius:5px;box-shadow:0 3px 10px rgba(0,0,0,.22);"></div>
<svg class="r" style="left:993px;top:7px;" width="26.0" height="22.0" viewBox="0 0 26 22"><path d="M2.6 13.3 L11.2 4.8 L19.6 12.2 L10.5 21.2 Z" fill="#fafafa" stroke="#3a3a3a" stroke-width="1.35" stroke-linejoin="round"/><path d="M9.6 10.4 V3.6 A2.1 2.1 0 0 1 13.8 3.6 V9.6" fill="#fafafa" stroke="#3a3a3a" stroke-width="1.25"/><path d="M16 7.8 C19 6 22.8 7.4 22.7 12 C22.6 15 22.2 18 21.7 20.8 C21.2 17 20.6 14 19.6 12.2 Z" fill="#1e6fc0"/><path d="M17.2 8.4 C18.6 7.8 20.4 8.2 21 9.8 L19.4 11.4 Z" fill="#8ec0ee"/></svg>
<div class="r" style="left:991px;top:30.2px;width:30px;height:7.8px;background:#c0504d;"></div>
<svg class="r" style="left:1022px;top:20.5px;" width="9" height="6.3" viewBox="0 0 9 6.3"><path d="M1.58 1.58 L4.50 4.71 L7.42 1.58" fill="none" stroke="#242424" stroke-width="1.3" stroke-linecap="round" stroke-linejoin="round"/></svg>
<svg class="r" style="left:1043px;top:9px;" width="31" height="22" viewBox="0 0 31 22"><path d="M8.2 19.4 H1.6 V1.5 H20.7" fill="none" stroke="#555" stroke-width="1.4"/><path d="M24.2 3 A2.6 2.6 0 0 1 28 6.6 L16 18 L10.6 19.4 L12.2 14.4 Z" fill="#fafafa" stroke="#1e8fe0" stroke-width="1.5" stroke-linejoin="round"/><path d="M10.6 19.4 L12.2 14.4 L16 18 Z" fill="#4aa3e8"/><path d="M22.4 4.8 L26.2 8.4" stroke="#1e8fe0" stroke-width="1.3"/></svg>
<div class="r" style="left:1043px;top:30.2px;width:30px;height:7.8px;background:#4f81bd;"></div>
<svg class="r" style="left:1074px;top:20.5px;" width="9" height="6.3" viewBox="0 0 9 6.3"><path d="M1.58 1.58 L4.50 4.71 L7.42 1.58" fill="none" stroke="#242424" stroke-width="1.3" stroke-linecap="round" stroke-linejoin="round"/></svg>
<span class="t" style="left:997.60px;top:49px;font-size:13.6px;line-height:15px;height:15px;color:#242424;transform:scaleX(0.8000);">Fill</span>
<span class="t" style="left:1036.90px;top:49px;font-size:13.6px;line-height:15px;height:15px;color:#242424;transform:scaleX(0.9183);">Outline</span>
<div class="r" style="left:1085px;top:25px;width:105.5px;height:29.5px;background:#fff;border:1px solid #8c8c8c;border-radius:5px;"></div>
<span class="t" style="left:1088.00px;top:33px;font-size:13.6px;line-height:15px;height:15px;color:#242424;transform:scaleX(0.9520);">Chart Area</span>
<svg class="r" style="left:1178.5px;top:37px;" width="9" height="6" viewBox="0 0 9 6"><path d="M1.58 1.58 L4.50 4.42 L7.42 1.58" fill="none" stroke="#242424" stroke-width="1.3" stroke-linecap="round" stroke-linejoin="round"/></svg>
<div class="r" style="left:975px;top:99px;width:279px;height:872px;background:#fff;border:1px solid #555;border-radius:5px;box-shadow:2px 3px 10px rgba(0,0,0,.12);"></div>
<div class="r" style="left:982px;top:106px;width:265px;height:30px;background:#fff;border:1px solid #767676;"></div>
<span class="t" style="left:990.30px;top:111px;font-size:13px;line-height:15px;height:15px;color:#767676;transform:scaleX(0.9697);">Search the menus</span>
<div class="r" style="left:1017px;top:178px;width:234.5px;height:1px;background:#d2d2d2;"></div>
<div class="r" style="left:1017px;top:370.3px;width:234.5px;height:1px;background:#d2d2d2;"></div>
<div class="r" style="left:1017px;top:409px;width:234.5px;height:1px;background:#d2d2d2;"></div>
<div class="r" style="left:1017px;top:448px;width:234.5px;height:1px;background:#d2d2d2;"></div>
<div class="r" style="left:1017px;top:631px;width:234.5px;height:1px;background:#d2d2d2;"></div>
<div class="r" style="left:1017px;top:742.3px;width:234.5px;height:1px;background:#d2d2d2;"></div>
<div class="r" style="left:1017px;top:781px;width:234.5px;height:1px;background:#d2d2d2;"></div>
<div class="r" style="left:1017px;top:820.3px;width:234.5px;height:1px;background:#d2d2d2;"></div>
<div class="r" style="left:1017px;top:895.3px;width:234.5px;height:1px;background:#d2d2d2;"></div>
<span class="t" style="left:1022.00px;top:150px;font-size:15px;line-height:17px;height:17px;color:#242424;transform:scaleX(0.9533);"><u>R</u>efresh Data</span>
<span class="t" style="left:1022.00px;top:189px;font-size:15px;line-height:17px;height:17px;color:#242424;transform:scaleX(0.9305);">Cu<u>t</u></span>
<span class="t" style="left:1022.00px;top:225px;font-size:15px;line-height:17px;height:17px;color:#242424;transform:scaleX(0.9714);"><u>C</u>opy</span>
<span class="t" style="left:1022.00px;top:342px;font-size:15px;line-height:17px;height:17px;color:#b2b2b2;transform:scaleX(0.9137);">Paste <u>S</u>pecial...</span>
<span class="t" style="left:1022.00px;top:381px;font-size:15px;line-height:17px;height:17px;color:#242424;transform:scaleX(0.9702);">Reset to M<u>a</u>tch Style</span>
<span class="t" style="left:1022.00px;top:420px;font-size:15px;line-height:17px;height:17px;color:#242424;transform:scaleX(0.8824);"><u>F</u>ont...</span>
<span class="t" style="left:1022.00px;top:459px;font-size:15px;line-height:17px;height:17px;color:#242424;transform:scaleX(0.9367);">Change Chart T<u>y</u>pe...</span>
<span class="t" style="left:1022.00px;top:495px;font-size:15px;line-height:17px;height:17px;color:#242424;transform:scaleX(0.9468);"><u>S</u>ave as Template...</span>
<span class="t" style="left:1022.00px;top:531px;font-size:15px;line-height:17px;height:17px;color:#242424;transform:scaleX(0.9361);">S<u>e</u>lect Data...</span>
<span class="t" style="left:1022.00px;top:567px;font-size:15px;line-height:17px;height:17px;color:#242424;transform:scaleX(0.9361);">Mo<u>v</u>e Chart...</span>
<span class="t" style="left:1022.00px;top:603px;font-size:15px;line-height:17px;height:17px;color:#b2b2b2;transform:scaleX(0.9767);">3-D <u>R</u>otation...</span>
<span class="t" style="left:1022.00px;top:642px;font-size:15px;line-height:17px;height:17px;color:#b2b2b2;transform:scaleX(0.9641);"><u>G</u>roup</span>
<span class="t" style="left:1022.00px;top:678px;font-size:15px;line-height:17px;height:17px;color:#242424;">B<u>r</u>ing to Front</span>
<span class="t" style="left:1022.00px;top:714px;font-size:15px;line-height:17px;height:17px;color:#242424;transform:scaleX(0.9650);">Send to Bac<u>k</u></span>
<span class="t" style="left:1022.00px;top:753px;font-size:15px;line-height:17px;height:17px;color:#242424;transform:scaleX(0.9064);"><u>S</u>ave as Picture...</span>
<span class="t" style="left:1022.00px;top:792px;font-size:15px;line-height:17px;height:17px;color:#242424;transform:scaleX(0.9432);">Assig<u>n</u> Macro...</span>
<span class="t" style="left:1022.00px;top:831px;font-size:15px;line-height:17px;height:17px;color:#242424;transform:scaleX(0.9845);">View <u>A</u>lt Text...</span>
<span class="t" style="left:1022.00px;top:867px;font-size:15px;line-height:17px;height:17px;color:#242424;transform:scaleX(0.9531);"><u>F</u>ormat Chart Area...</span>
<span class="t" style="left:1022.00px;top:906px;font-size:15px;line-height:17px;height:17px;color:#242424;transform:scaleX(0.9575);">PivotChart <u>O</u>ptions...</span>
<span class="t" style="left:1022.00px;top:942px;font-size:15px;line-height:17px;height:17px;color:#242424;transform:scaleX(0.9607);">Show Fiel<u>d</u> List</span>
<span class="t" style="left:1023.50px;top:265px;font-size:14.2px;line-height:16px;height:16px;color:#1a1a1a;font-weight:700;transform:scaleX(0.9938);">Paste Options:</span>
<div class="r" style="left:976px;top:449.7px;width:211.8px;height:39px;background:transparent;border:4.8px solid #e81c24;"></div>
<svg class="r" style="left:1233px;top:642px;" width="10" height="15" viewBox="0 0 10 15"><path d="M1.5 1.5 L8 7.5 L1.5 13.5" fill="none" stroke="#b2b2b2" stroke-width="1.3"/></svg>
<svg class="r" style="left:1233px;top:679px;" width="10" height="15" viewBox="0 0 10 15"><path d="M1.5 1.5 L8 7.5 L1.5 13.5" fill="none" stroke="#333" stroke-width="1.3"/></svg>
<svg class="r" style="left:1233px;top:715px;" width="10" height="15" viewBox="0 0 10 15"><path d="M1.5 1.5 L8 7.5 L1.5 13.5" fill="none" stroke="#333" stroke-width="1.3"/></svg>
<div class="r" style="left:1223px;top:679px;width:1px;height:16px;background:#c8c8c8;"></div>
<div class="r" style="left:1223px;top:715px;width:1px;height:16px;background:#c8c8c8;"></div>
<svg class="r" style="left:985px;top:140px;" width="35" height="35" viewBox="0 0 35 35"><path d="M13.8 26.5 H9 V7.6 H17.3 L23.4 13.7" fill="none" stroke="#3a3a3a" stroke-width="1.4"/><path d="M17.2 7.8 V13.6 H23.2" fill="none" stroke="#3a3a3a" stroke-width="1.4"/><path d="M15.3 20.4 A5.4 5.4 0 0 1 24.9 18.3 M25.5 15.6 V20.2 H21.3 M25.6 22.4 A5.4 5.4 0 0 1 16 24.7 M15.2 26.9 V22.7 H19.6" fill="none" stroke="#2ea04f" stroke-width="1.5"/></svg>
<svg class="r" style="left:994px;top:186px;" width="14.0" height="20.5" viewBox="0 0 14 20.5"><path d="M3.2 0.5 L10.3 15.3 M10.8 0.5 L3.7 15.3" fill="none" stroke="#3a3a3a" stroke-width="1.15"/><circle cx="3.3" cy="17.3" r="1.9" fill="#fff" stroke="#2b88d8" stroke-width="1.25"/><circle cx="10.7" cy="17.3" r="1.9" fill="#fff" stroke="#2b88d8" stroke-width="1.25"/></svg>
<svg class="r" style="left:991px;top:222px;" width="20.5" height="20.5" viewBox="0 0 20.5 20.5"><path d="M6.5 17.3 H1 V0.7 H7 Q8.5 0.7 9.3 2.2" fill="#fafafa" stroke="#444" stroke-width="1.3"/><path d="M8.3 4.6 H15 L19.6 9.2 V19.4 H8.3 Z" fill="#fafafa" stroke="#444" stroke-width="1.35" stroke-linejoin="round"/><path d="M15 4.6 V9.2 H19.6" fill="none" stroke="#444" stroke-width="1.1"/><path d="M11.5 12.8 H16.5 M11.5 15.7 H16.5" stroke="#666" stroke-width="1.1"/></svg>
<svg class="r" style="left:993px;top:256.8px;" width="18.4" height="20.4" viewBox="0 0 36 40"><rect x="1.8" y="6.8" width="24.4" height="29.4" fill="#fafafa" stroke="#e8872a" stroke-width="3"/><path d="M6.6 11 V6 H10 A4 4 0 0 1 18 6 H21.4 V11 Z" fill="#fafafa" stroke="#858585" stroke-width="2.4" stroke-linejoin="round"/><rect x="18.2" y="17.8" width="15" height="19.8" fill="#fafafa" stroke="#555" stroke-width="2.6"/></svg>
<svg class="r" style="left:1026px;top:298.8px;" width="21.2" height="23.6" viewBox="0 0 36 40"><rect x="1.8" y="6.8" width="24.4" height="29.4" fill="#fafafa" stroke="#e8872a" stroke-width="3"/><path d="M6.6 11 V6 H10 A4 4 0 0 1 18 6 H21.4 V11 Z" fill="#fafafa" stroke="#858585" stroke-width="2.4" stroke-linejoin="round"/><rect x="18.2" y="17.8" width="15" height="19.8" fill="#fafafa" stroke="#555" stroke-width="2.6"/></svg>
<svg class="r" style="left:990px;top:377px;" width="20" height="22" viewBox="0 0 20 22"><path d="M11 1.5 H18.5 V20.5 H3.5 V10.5" fill="none" stroke="#4a4a4a" stroke-width="1.4"/><path d="M10.5 11 V9.2 A3.4 3.4 0 0 0 7.1 5.8 H2 M4.6 2.6 L1.4 5.8 L4.6 9" fill="none" stroke="#2b88d8" stroke-width="1.5"/><path d="M12 8 H15 M12 13.5 H15 M7 11.5 V14.5 H9.5" stroke="#777" stroke-width="1.3" fill="none"/></svg>
<span class="t" style="left:992.40px;top:413px;font-size:26.5px;line-height:30px;height:30px;color:#3a3a3a;transform:scaleX(0.9816);">A</span>
<svg class="r" style="left:991px;top:456px;" width="21" height="21" viewBox="0 0 21 21"><rect x="0.7" y="9" width="6.3" height="10.3" fill="#c8c8c8" stroke="#777" stroke-width="1.2"/><rect x="7" y="0.9" width="6.4" height="18.4" fill="#fafafa" stroke="#444" stroke-width="1.3"/><rect x="13.4" y="4.4" width="6.3" height="14.9" fill="#7fb8ec" stroke="#1a6bc0" stroke-width="1.3"/></svg>
<svg class="r" style="left:991px;top:492px;" width="21" height="21" viewBox="0 0 21 21"><path d="M1 20 V10 H6 V20 Z M6 20 V1 H11.5 V7 M11.5 5 H16 V8" fill="none" stroke="#444" stroke-width="1.2"/><path d="M8.5 9.5 H17.5 L19.8 11.8 V20 H8.5 Z" fill="#fff" stroke="#b146c2" stroke-width="1.4"/><path d="M11 9.5 V13 H16.5 V9.5 M11.5 20 V16.5 H16.5 V20" fill="none" stroke="#b146c2" stroke-width="1.2"/></svg>
<svg class="r" style="left:991px;top:529px;" width="20" height="19.5" viewBox="0 0 20 19.5"><rect x="0.3" y="0.3" width="13.2" height="12.2" fill="#2b7cd3"/><rect x="1.4" y="1.4" width="4.6" height="4.2" fill="#6fb0ea"/><rect x="7.6" y="1.4" width="4.8" height="4.2" fill="#6fb0ea"/><rect x="1.4" y="7.2" width="4.6" height="4.2" fill="#6fb0ea"/><rect x="7.6" y="7.2" width="4.8" height="4.2" fill="#6fb0ea"/><path d="M13.5 0.9 H19 V6.5 M13.5 6.3 H19 M0.8 12.5 V17.6 H10.5 M6.8 12.5 V17.6 M0.8 12.6 H10.5" fill="none" stroke="#444" stroke-width="1.3"/><rect x="11.2" y="12.8" width="3.8" height="5.6" fill="#5ea4e6" stroke="#1a6bc0" stroke-width="1.2"/><rect x="15" y="7.4" width="4.3" height="11" fill="#fafafa" stroke="#444" stroke-width="1.3"/></svg>
<svg class="r" style="left:991px;top:565px;" width="20" height="19.5" viewBox="0 0 20 19.5"><path d="M0.8 0.9 H19.2 V7 M0.8 0.9 V16.5 M0.8 4.2 H19.2 M0.8 8.4 H14 M0.8 12.6 H10 M6.8 0.9 V14.5 M13.5 0.9 V10 M0.8 16.5 H4.5 L7.8 14.4 H10" fill="none" stroke="#444" stroke-width="1.3"/><rect x="11.2" y="12.4" width="3.8" height="6" fill="#2b7cd3" stroke="#1a6bc0" stroke-width="1.2"/><rect x="15" y="7.8" width="4.3" height="10.6" fill="#fafafa" stroke="#444" stroke-width="1.3"/></svg>
<svg class="r" style="left:991px;top:599px;" width="19" height="21" viewBox="0 0 19 21"><path d="M2 3.2 Q2 1.6 4 1.8 L15.5 3.2 Q17.2 3.4 17.2 5 V17.6 Q17.2 19.6 15.2 19.4 L3.8 17.8 Q2 17.6 2 16 Z" fill="#dcdcdc" stroke="#ababab" stroke-width="1.4"/><path d="M2.2 4.8 Q2.2 3.6 3.8 3.8 L13 5 Q14.4 5.2 14.4 6.6 V19" fill="#ececec" stroke="#ababab" stroke-width="1.3"/></svg>
<svg class="r" style="left:990.5px;top:639px;" width="20" height="20" viewBox="0 0 20 20"><rect x="2.6" y="2.6" width="11.6" height="10.2" fill="none" stroke="#ababab" stroke-width="1.7"/><rect x="8" y="7.6" width="11" height="10.4" fill="none" stroke="#ababab" stroke-width="1.7"/><rect x="0" y="0" width="2.2" height="2.2" fill="#ababab"/><rect x="17.8" y="0" width="2.2" height="2.2" fill="#ababab"/><rect x="0" y="17.6" width="2.2" height="2.2" fill="#ababab"/><rect x="17.8" y="17.6" width="2.2" height="2.2" fill="#ababab"/><path d="M1 4 V8 M5 0.9 H9 M11 0.9 H15 M1 11 V15 M4 18.9 H7" stroke="#cfcfcf" stroke-width="1"/></svg>
<svg class="r" style="left:992px;top:676px;" width="18" height="18" viewBox="0 0 18 18"><path d="M1.4 7.6 V1.6 H7.6 M10.5 16.3 H16.8 V10.4" fill="none" stroke="#444" stroke-width="1.3"/><rect x="4.2" y="4.5" width="9.6" height="9.1" fill="#fbd791" stroke="#e8802a" stroke-width="1.5"/></svg>
<svg class="r" style="left:990.5px;top:710.5px;" width="21" height="21" viewBox="0 0 21 21"><rect x="4.6" y="4.4" width="12.2" height="12" fill="#fbd791" stroke="#e8802a" stroke-width="1.5"/><rect x="0.9" y="0.8" width="8.2" height="8.2" fill="#f2f2f2" stroke="#555" stroke-width="1.6"/><rect x="11.8" y="11.8" width="8.2" height="8.2" fill="#f2f2f2" stroke="#555" stroke-width="1.6"/></svg>
<svg class="r" style="left:991px;top:830px;" width="21" height="19" viewBox="0 0 21 19"><path d="M8 14.6 H0.8 V0.8 H19.4 V10" fill="none" stroke="#444" stroke-width="1.4"/><path d="M1 12 L6 7 L10 11 L13 8.4 L15 10" fill="none" stroke="#444" stroke-width="1.2"/><circle cx="15" cy="4.2" r="1.3" fill="#444"/><rect x="8.2" y="11.6" width="11.6" height="6.2" fill="#fff" stroke="#2b88d8" stroke-width="1.5"/><path d="M11 14.7 H17" stroke="#777" stroke-width="1.4"/></svg>
<svg class="r" style="left:985px;top:858px;" width="35" height="34" viewBox="0 0 35 34"><path d="M6.4 13.5 L11.6 8.6 L17.8 13.3 L12.3 18.9 Z" fill="#fafafa" stroke="#3a3a3a" stroke-width="1.35" stroke-linejoin="round"/><path d="M11.6 11 V7.6 A1.5 1.5 0 0 1 14.4 7.6 V13" fill="#fafafa" stroke="#3a3a3a" stroke-width="1.25"/><path d="M16.6 10.6 C19.2 10 20.2 12.2 19.6 15.2" fill="none" stroke="#6bb5f0" stroke-width="1.6"/><path d="M25.8 14.2 L19.2 20.8" stroke="#3a3a3a" stroke-width="3.4" stroke-linecap="round"/><path d="M25.6 14.4 L19.4 20.6" stroke="#fafafa" stroke-width="1.1" stroke-linecap="round"/><path d="M17.2 20.2 L19.4 22.4 C18.6 25.6 14.6 26.4 10 24.6 C13.2 24 14.6 21.4 17.2 20.2 Z" fill="#1a6fc6"/><path d="M14.6 23.8 C15.6 23.4 16.6 22.6 17.2 21.8" stroke="#7fc0f4" stroke-width="1.1" fill="none"/></svg>
<svg class="r" style="left:991px;top:903px;" width="20" height="20" viewBox="0 0 20 20"><rect x="0.7" y="0.7" width="18.8" height="18.4" fill="#e2e2e2" stroke="#444" stroke-width="1.4"/><rect x="2.6" y="2.8" width="2.6" height="2.4" fill="#f6f6f6" stroke="#777" stroke-width="1"/><rect x="7.4" y="2.8" width="9.8" height="2.4" fill="#f6f6f6" stroke="#777" stroke-width="1"/><rect x="2.6" y="8" width="2.6" height="8.8" fill="#f6f6f6" stroke="#777" stroke-width="1"/><rect x="9.4" y="9" width="10.1" height="10.1" fill="#fff" stroke="#444" stroke-width="1.3"/><rect x="11.2" y="10.8" width="2.8" height="2.6" fill="#2b88d8"/><rect x="15.2" y="10.8" width="2.8" height="2.6" fill="#2b88d8"/><rect x="11.2" y="14.6" width="2.8" height="2.6" fill="#2b88d8"/><rect x="15.2" y="14.6" width="2.8" height="2.6" fill="#2b88d8"/></svg>
<svg class="r" style="left:993px;top:939px;" width="16" height="21" viewBox="0 0 16 21"><rect x="0.7" y="0.7" width="13.6" height="19" fill="#fff" stroke="#444" stroke-width="1.3"/><path d="M0.7 11.5 H14.3 M0.7 15.6 H14.3 M7.5 11.5 V19.7" stroke="#444" stroke-width="1.2"/><path d="M3.5 4.2 H5 M7 4.2 H11.5 M3.5 7.6 H5 M7 7.6 H11.5" stroke="#777" stroke-width="1.1"/></svg>
</div></body></html>
